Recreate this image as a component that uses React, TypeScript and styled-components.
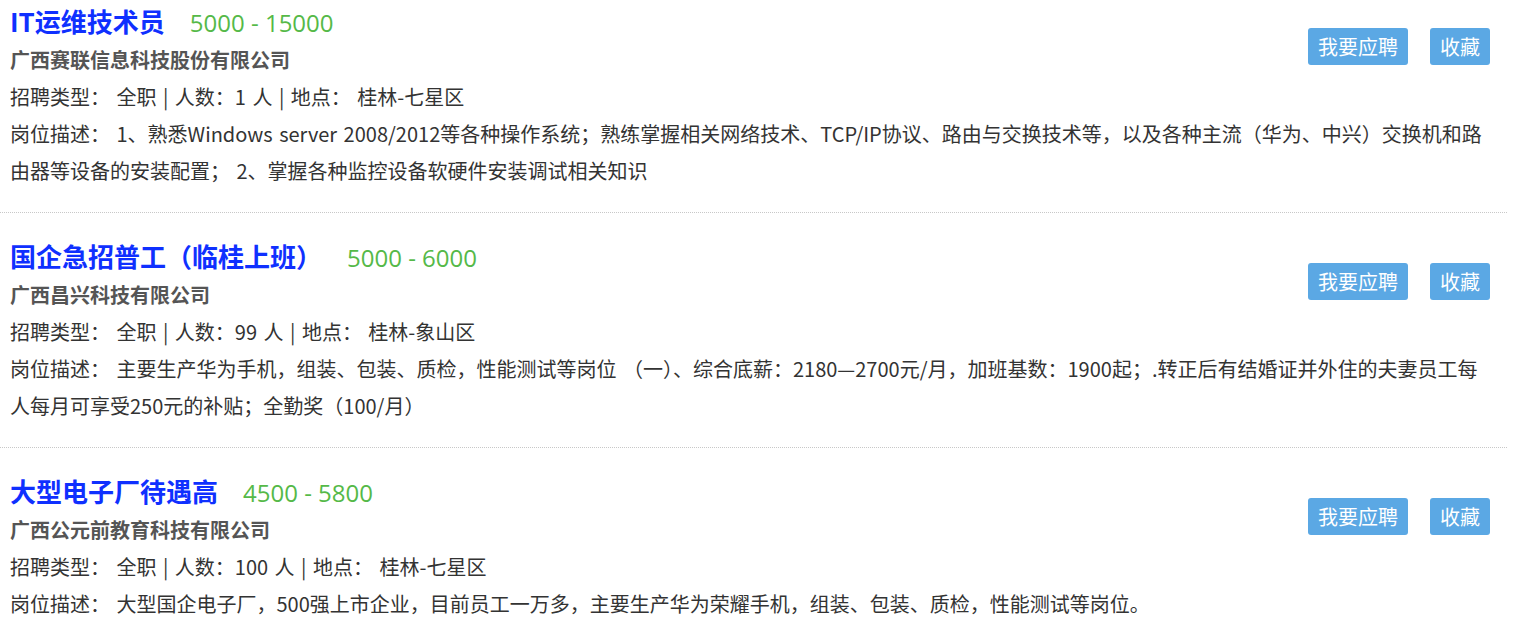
import { createGlobalStyle, styled } from "styled-components"

type Job = {
    id: number,
    title: string,
    salary: string,
    company: string,
    count: number,
    place: string,
    desc: string,
}

const jobs: Job[] = [
    {
        id: 1,
        title: "IT运维技术员",
        salary: "5000 - 15000",
        company: "广西赛联信息科技股份有限公司",
        count: 1,
        place: "桂林-七星区",
        desc: "1、熟悉Windows server 2008/2012等各种操作系统；熟练掌握相关网络技术、TCP/IP协议、路由与交换技术等，以及各种主流（华为、中兴）交换机和路由器等设备的安装配置； 2、掌握各种监控设备软硬件安装调试相关知识",
    },
    {
        id: 2,
        title: "国企急招普工（临桂上班）",
        salary: "5000 - 6000",
        company: "广西昌兴科技有限公司",
        count: 99,
        place: "桂林-象山区",
        desc: "主要生产华为手机，组装、包装、质检，性能测试等岗位 （一）、综合底薪：2180—2700元/月，加班基数：1900起；.转正后有结婚证并外住的夫妻员工每人每月可享受250元的补贴；全勤奖（100/月）",
    },
    {
        id: 3,
        title: "大型电子厂待遇高",
        salary: "4500 - 5800",
        company: "广西公元前教育科技有限公司",
        count: 100,
        place: "桂林-七星区",
        desc: "大型国企电子厂，500强上市企业，目前员工一万多，主要生产华为荣耀手机，组装、包装、质检，性能测试等岗位。",
    },
]

const GlobalStyle = createGlobalStyle`
    body {
        margin: 0;
        background: #fff;
        font-family: "Noto Sans CJK SC", sans-serif;
        color: #333;
    }
`

const List = styled.ul`
    list-style: none;
    margin: 0;
    padding: 0 12px 0 0;
`

const Item = styled.li`
    padding: 26px 0 23px 10px;
    border-bottom: 1px dotted #c8c8c8;
    &:first-child {
        padding-top: 4px;
    }
`

const Head = styled.div`
    display: flex;
    justify-content: space-between;
    align-items: flex-start;
`

const Info = styled.div`
    display: flex;
    flex-direction: column;
`

const TitleRow = styled.div`
    display: flex;
    align-items: baseline;
    gap: 25px;
    height: 37px;
    line-height: 34px;
`

const Title = styled.a`
    font-size: 26px;
    font-weight: bold;
    color: #0f30ff;
    text-decoration: none;
    cursor: pointer;
`

const Salary = styled.span`
    font-family: "Open Sans", "Noto Sans CJK SC", sans-serif;
    font-size: 24px;
    color: #55b948;
`

const Company = styled.div`
    font-size: 20px;
    font-weight: bold;
    color: #555;
    line-height: 37px;
`

const Line = styled.div`
    font-size: 20px;
    line-height: 37px;
    color: #333;
    padding-right: 14px;
    word-spacing: 2px;
`

const Actions = styled.div`
    display: flex;
    gap: 22px;
    margin-top: 24px;
    margin-right: 17px;
`

const Button = styled.button`
    background: #5ba8e4;
    color: #fff;
    border: none;
    border-radius: 3px;
    height: 37px;
    padding: 0 10px;
    font-family: inherit;
    font-size: 20px;
    cursor: pointer;
`

export default function App() {
    return (<>
        <GlobalStyle />
        <List>
            {jobs.map(j => {
                return (<Item key={j.id}>
                    <Head>
                        <Info>
                            <TitleRow>
                                <Title>{j.title}</Title>
                                <Salary>{j.salary}</Salary>
                            </TitleRow>
                            <Company>{j.company}</Company>
                            <Line>{`招聘类型： 全职 | 人数：${j.count} 人 | 地点： ${j.place}`}</Line>
                        </Info>
                        <Actions>
                            <Button>我要应聘</Button>
                            <Button>收藏</Button>
                        </Actions>
                    </Head>
                    <Line>{`岗位描述： ${j.desc}`}</Line>
                </Item>)
            })}
        </List>
    </>)
}
